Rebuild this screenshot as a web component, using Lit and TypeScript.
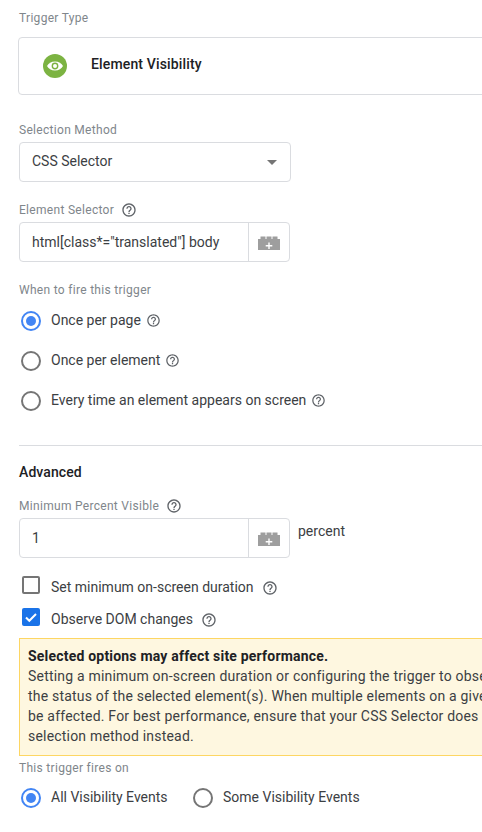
import { LitElement, html, css, svg } from "lit";
import { customElement } from "lit/decorators.js";

const help = (size: number) => html`<svg class="help" width=${size} height=${size} viewBox="0 0 24 24" fill="#5f6368"><path d="M11 18h2v-2h-2v2zm1-16C6.48 2 2 6.48 2 12s4.48 10 10 10 10-4.48 10-10S17.52 2 12 2zm0 18c-4.41 0-8-3.590-8-8s3.590-8 8-8 8 3.590 8 8-3.590 8-8 8zm0-14c-2.210 0-4 1.790-4 4h2c0-1.100.9-2 2-2s2 .9 2 2c0 2-3 1.750-3 5h2c0-2.250 3-2.500 3-5 0-2.210-1.790-4-4-4z"/></svg>`;

const brick = svg`<svg width="24" height="14" viewBox="0 0 24 14"><path fill="#9e9e9e" d="M1 3h2.500V.5h5V3h1V.5h5V3h1V.5h5V3H23v11H1z"/><path fill="#fff" d="M11.300 6.500h1.400v2.600h2.600v1.300h-2.600V13h-1.400v-2.600H8.700V9.100h2.600z"/></svg>`;

@customElement("app-root")
export class AppRoot extends LitElement {
  static styles = css`
    :host {
      display: block;
      width: 482px;
      height: 832px;
      overflow: hidden;
      background: #fff;
      font-family: Roboto, "Liberation Sans", sans-serif;
      color: #3c4043;
      font-size: 14px;
    }
    .page {
      display: flex;
      flex-direction: column;
      padding: 10px 0 0 19px;
      width: 463px;
    }
    .label {
      display: flex;
      align-items: center;
      gap: 7px;
      height: 16px;
      font-size: 12px;
      line-height: 16px;
      color: #80868b;
      letter-spacing: 0.3px;
      white-space: nowrap;
    }
    .card {
      margin: 11px 0 0 -1px;
      width: 520px;
      height: 58px;
      box-sizing: border-box;
      border: 1px solid #dadce0;
      border-radius: 4px;
      display: flex;
      align-items: center;
      padding-left: 24px;
      gap: 24px;
      font-weight: 500;
      color: #202124;
      letter-spacing: 0.15px;
    }
    .card span { padding-bottom: 4px; }
    .eye { width: 24px; height: 24px; flex: none; }
    .m-label { margin-top: 27px; }
    .select {
      margin-top: 4px;
      width: 272px;
      height: 40px;
      box-sizing: border-box;
      border: 1px solid #dadce0;
      border-radius: 4px;
      display: flex;
      align-items: center;
      justify-content: space-between;
      padding: 0 13px 0 12px;
    }
    .select span:first-child { padding-bottom: 2px; }
    .caret {
      width: 0;
      height: 0;
      border-left: 5px solid transparent;
      border-right: 5px solid transparent;
      border-top: 5px solid #757575;
    }
    .m-sel { margin-top: 20px; }
    .input {
      margin-top: 4px;
      width: 271px;
      height: 40px;
      box-sizing: border-box;
      border: 1px solid #dadce0;
      border-radius: 4px;
      display: flex;
      align-items: stretch;
      flex: none;
    }
    .value {
      flex: 1;
      display: flex;
      align-items: center;
      padding-left: 12px;
      white-space: nowrap;
      overflow: hidden;
    }
    .var {
      width: 41px;
      box-sizing: border-box;
      flex: none;
      border-left: 1px solid #dadce0;
      display: flex;
      align-items: center;
      justify-content: center;
      padding-top: 1px;
    }
    .m-when { margin-top: 20px; }
    .radios { display: flex; flex-direction: column; gap: 20px; margin-top: 13px; }
    .opt {
      display: flex;
      align-items: flex-start;
      height: 20px;
      line-height: 18px;
      white-space: nowrap;
    }
    .radio {
      width: 20px;
      height: 20px;
      box-sizing: border-box;
      border: 2px solid #757575;
      border-radius: 50%;
      margin: 0 10px 0 2px;
      flex: none;
      display: flex;
      align-items: center;
      justify-content: center;
    }
    .radio.on { border-color: #4285f4; }
    .radio.on::after {
      content: "";
      width: 10px;
      height: 10px;
      border-radius: 50%;
      background: #4285f4;
    }
    .opt .help { margin: 2px 0 0 5px; }
    hr {
      margin: 34px 0 0 0;
      width: 463px;
      border: 0;
      border-top: 1px solid #dadce0;
    }
    .advanced {
      margin-top: 18px;
      height: 16px;
      line-height: 16px;
      font-weight: 500;
      color: #202124;
      letter-spacing: 0.1px;
    }
    .m-min { margin-top: 18px; }
    .input-row { display: flex; align-items: flex-start; gap: 8px; }
    .unit { margin-top: 8px; line-height: 18px; }
    .checks { margin-top: 17px; display: flex; flex-direction: column; gap: 12px; }
    .check {
      display: flex;
      align-items: flex-start;
      height: 20px;
      line-height: 24px;
      white-space: nowrap;
    }
    .box {
      width: 18px;
      height: 18px;
      box-sizing: border-box;
      border: 2px solid #757575;
      border-radius: 2px;
      margin: 1px 11px 0 3px;
      flex: none;
    }
    .box.on {
      border: 0;
      background: #1a73e8;
      display: flex;
      align-items: center;
      justify-content: center;
    }
    .check .help { margin: 5px 0 0 8px; }
    .warn {
      margin-top: 11px;
      width: 480px;
      height: 118px;
      box-sizing: border-box;
      border: 1px solid #fdd663;
      background: #fef7e0;
      padding: 7px 0 0 8px;
      line-height: 20px;
      letter-spacing: 0.2px;
      white-space: nowrap;
      overflow: hidden;
    }
    .warn b { font-weight: 700; display: block; color: #202124; }
    .warn span { display: block; }
    .m-fires { margin-top: 4px; }
    .fires { display: flex; margin-top: 12px; height: 20px; }
    .fires .opt:first-child { width: 172px; }
  `;

  render() {
    return html`<div class="page">
      <div class="label">Trigger Type</div>
      <div class="card">
        <svg class="eye" viewBox="0 0 24 24">
          <circle cx="12" cy="12" r="12" fill="#7cb342"/>
          <path fill="#fff" d="M12 7.500c-3.700 0-6.700 2-8 4.500 1.300 2.500 4.300 4.500 8 4.500s6.700-2 8-4.500c-1.300-2.500-4.300-4.500-8-4.500z"/>
          <circle cx="12" cy="12" r="2.700" fill="none" stroke="#7cb342" stroke-width="1.400"/>
        </svg>
        <span>Element Visibility</span>
      </div>

      <div class="label m-label">Selection Method</div>
      <div class="select"><span>CSS Selector</span><span class="caret"></span></div>

      <div class="label m-sel">Element Selector ${help(16)}</div>
      <div class="input">
        <div class="value">html[class*="translated"] body</div>
        <div class="var">${brick}</div>
      </div>

      <div class="label m-when">When to fire this trigger</div>
      <div class="radios">
        <div class="opt"><span class="radio on"></span>Once per page${help(15)}</div>
        <div class="opt"><span class="radio"></span>Once per element${help(15)}</div>
        <div class="opt"><span class="radio"></span>Every time an element appears on screen${help(15)}</div>
      </div>

      <hr />
      <div class="advanced">Advanced</div>

      <div class="label m-min">Minimum Percent Visible ${help(16)}</div>
      <div class="input-row">
        <div class="input">
          <div class="value">1</div>
          <div class="var">${brick}</div>
        </div>
        <div class="unit">percent</div>
      </div>

      <div class="checks">
        <div class="check"><span class="box"></span>Set minimum on-screen duration${help(16)}</div>
        <div class="check">
          <span class="box on">
            <svg width="14" height="14" viewBox="0 0 14 14"><path fill="none" stroke="#fff" stroke-width="2" d="M2 7.500l3.300 3.300L12 4"/></svg>
          </span>
          Observe DOM changes${help(16)}
        </div>
      </div>

      <div class="warn">
        <b>Selected options may affect site performance.</b>
        <span>Setting a minimum on-screen duration or configuring the trigger to observe DOM changes</span>
        <span>the status of the selected element(s). When multiple elements on a given page</span>
        <span>be affected. For best performance, ensure that your CSS Selector does not match</span>
        <span>selection method instead.</span>
      </div>

      <div class="label m-fires">This trigger fires on</div>
      <div class="fires">
        <div class="opt"><span class="radio on"></span>All Visibility Events</div>
        <div class="opt"><span class="radio"></span>Some Visibility Events</div>
      </div>
    </div>`;
  }
}
